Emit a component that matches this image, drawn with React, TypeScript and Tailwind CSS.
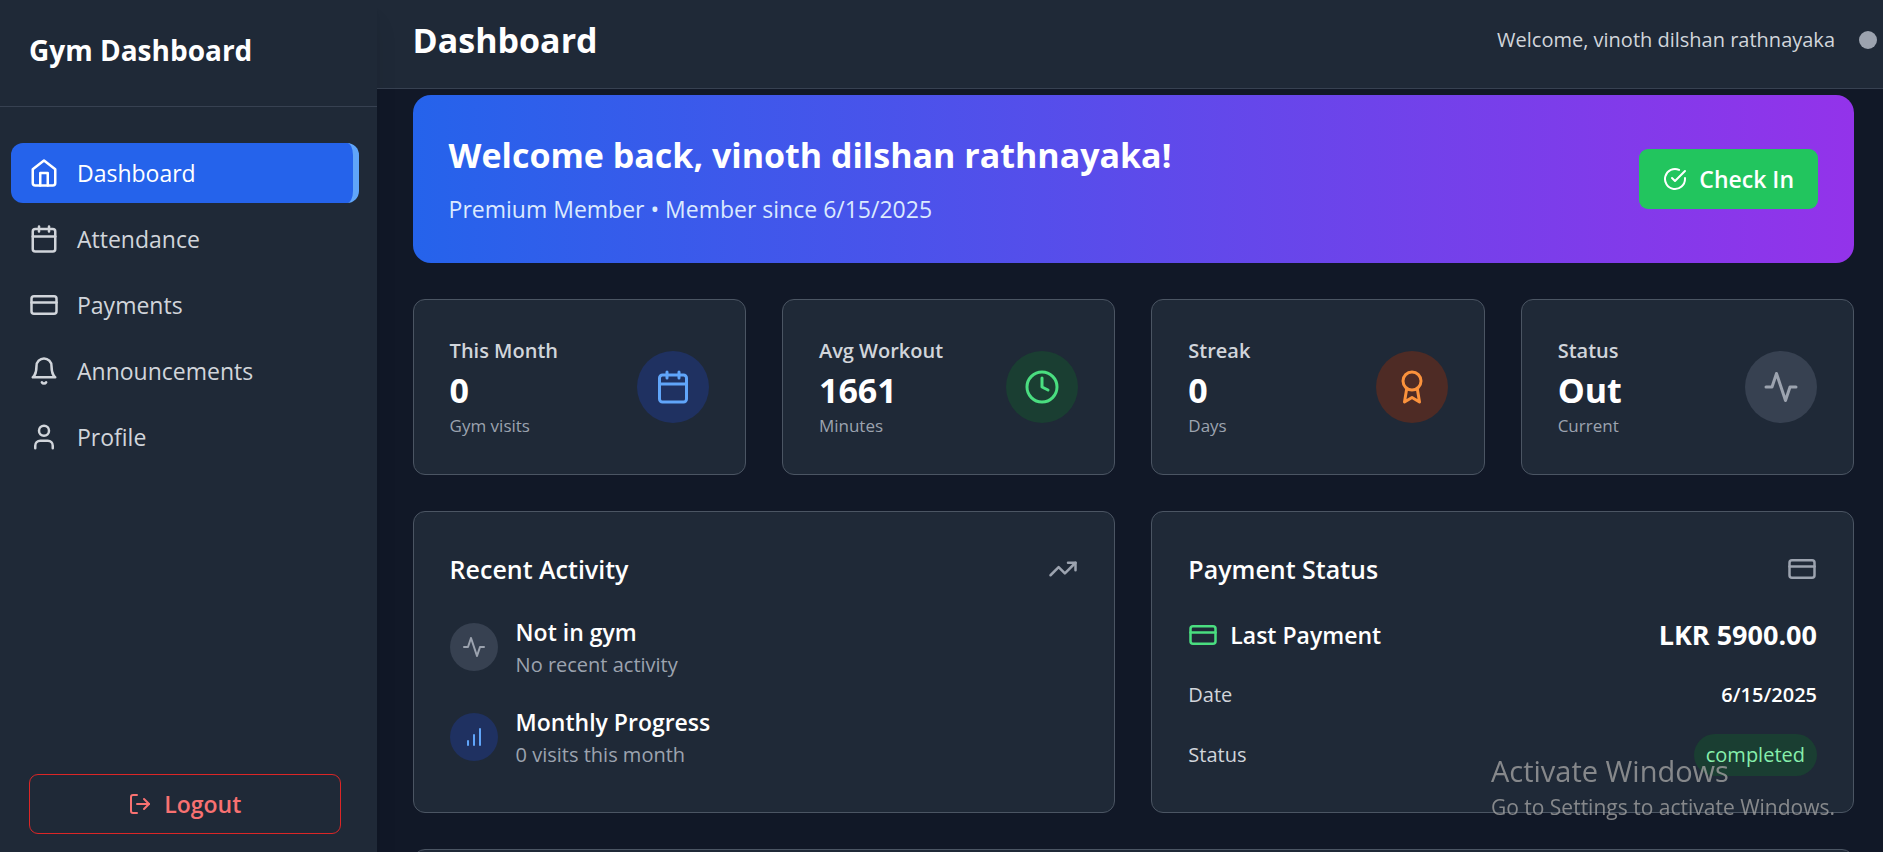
import type { ComponentType, ReactNode } from 'react';
import { Calendar, Clock, CreditCard, LogOut, TrendingUp, User } from 'lucide-react';
import { FiActivity, FiBarChart, FiBell, FiCheckCircle, FiHome } from 'react-icons/fi';

type Icon = ComponentType<{ className?: string }>;

const MEMBER = 'vinoth dilshan rathnayaka';

function AwardIcon({ className }: { className?: string }) {
  return (
    <svg
      className={className}
      viewBox="0 0 24 24"
      fill="none"
      stroke="currentColor"
      strokeWidth="2"
      strokeLinecap="round"
      strokeLinejoin="round"
      aria-hidden="true"
    >
      <circle cx="12" cy="8" r="6" />
      <path d="M15.477 12.89 17 22l-5-3-5 3 1.523-9.11" />
    </svg>
  );
}

const navItems: { label: string; icon: Icon; active?: boolean }[] = [
  { label: 'Dashboard', icon: FiHome, active: true },
  { label: 'Attendance', icon: Calendar },
  { label: 'Payments', icon: CreditCard },
  { label: 'Announcements', icon: FiBell },
  { label: 'Profile', icon: User },
];

const stats: { label: string; value: string; note: string; icon: Icon; tone: string }[] = [
  { label: 'This Month', value: '0', note: 'Gym visits', icon: Calendar, tone: 'bg-[#1f3161] text-[#60a5fa]' },
  { label: 'Avg Workout', value: '1661', note: 'Minutes', icon: Clock, tone: 'bg-[#1a3e32] text-[#4ade80]' },
  { label: 'Streak', value: '0', note: 'Days', icon: AwardIcon, tone: 'bg-[#4e2b25] text-[#fb923c]' },
  { label: 'Status', value: 'Out', note: 'Current', icon: FiActivity, tone: 'bg-[#374151] text-[#9ca3af]' },
];

const activities: { title: string; note: string; icon: Icon; tone: string }[] = [
  { title: 'Not in gym', note: 'No recent activity', icon: FiActivity, tone: 'bg-[#374151] text-[#9ca3af]' },
  { title: 'Monthly Progress', note: '0 visits this month', icon: FiBarChart, tone: 'bg-[#1f3161] text-[#60a5fa]' },
];

function Card({ children, className = '' }: { children?: ReactNode; className?: string }) {
  return (
    <section className={`rounded-xl border border-[#4b5563] bg-[#1f2937] p-9 ${className}`}>{children}</section>
  );
}

function CardHeader({ title, icon: Icon }: { title: string; icon: Icon }) {
  return (
    <div className="mb-6 flex items-center justify-between">
      <h3 className="text-[25px] leading-[42px] font-semibold text-white">{title}</h3>
      <Icon className="size-[30px] text-[#9ca3af]" />
    </div>
  );
}

function Sidebar() {
  return (
    <aside className="z-10 flex w-1/5 shrink-0 flex-col bg-[#1f2937] shadow-xl">
      <div className="border-b border-[#374151] px-[29px] pt-[29px] pb-[35px]">
        <h1 className="text-[28px] leading-[42px] font-bold whitespace-nowrap text-white">Gym Dashboard</h1>
      </div>
      <nav className="mt-9 flex flex-1 flex-col gap-1.5 pr-[18px] pl-[11px]">
        {navItems.map(({ label, icon: Icon, active }) => (
          <a
            key={label}
            href="#"
            aria-current={active ? 'page' : undefined}
            className={`flex h-[60px] items-center gap-[18px] rounded-xl pl-[18px] text-[23px] leading-9 ${
              active ? 'border-r-[6px] border-[#60a5fa] bg-[#2563eb] text-white' : 'text-[#d1d5db]'
            }`}
          >
            <Icon className="size-[30px]" />
            {label}
          </a>
        ))}
      </nav>
      <div className="pr-9 pb-[18px] pl-[29px]">
        <button
          type="button"
          className="flex h-[60px] w-full items-center justify-center gap-3 rounded-[9px] border border-[#dc2626] text-[23px] leading-9 font-semibold text-[#f87171]"
        >
          <LogOut className="size-6" />
          Logout
        </button>
      </div>
    </aside>
  );
}

function Header() {
  return (
    <header className="flex items-center justify-between border-b border-[#374151] bg-[#1f2937] pt-4 pr-1.5 pb-6 pl-9">
      <h2 className="text-[34px] leading-[48px] font-bold text-white">Dashboard</h2>
      <div className="flex items-center gap-6">
        <span className="text-[20px] leading-[30px] text-[#d1d5db]">Welcome, {MEMBER}</span>
        <span className="size-[18px] rounded-full bg-[#9ca3af]" />
      </div>
    </header>
  );
}

function Banner() {
  return (
    <section className="flex items-center justify-between rounded-[18px] bg-linear-to-r/srgb from-[#2563eb] to-[#9333ea] p-9">
      <div>
        <h2 className="mb-3 text-[34px] leading-[48px] font-bold text-white">Welcome back, {MEMBER}!</h2>
        <p className="text-[23px] leading-9 text-[#dbeafe]">Premium Member • Member since 6/15/2025</p>
      </div>
      <button
        type="button"
        className="flex h-[60px] items-center gap-3 rounded-[9px] bg-[#22c55e] px-6 text-[23px] leading-9 font-semibold text-white"
      >
        <FiCheckCircle className="size-6" />
        Check In
      </button>
    </section>
  );
}

export default function App() {
  return (
    <div className="flex h-screen overflow-hidden bg-[#111827] font-['Open_Sans','Noto_Sans',sans-serif]">
      <Sidebar />
      <div className="flex min-w-0 flex-1 flex-col">
        <Header />
        <main className="flex min-h-0 flex-1 flex-col gap-9 overflow-hidden pt-1.5 pr-[29px] pl-9 *:shrink-0">
          <Banner />
          <div className="grid grid-cols-4 gap-9">
            {stats.map(({ label, value, note, icon: Icon, tone }) => (
              <Card key={label} className="flex items-center justify-between">
                <div>
                  <p className="text-[20px] leading-[30px] font-semibold text-[#d1d5db]">{label}</p>
                  <p className="text-[34px] leading-[48px] font-bold text-white">{value}</p>
                  <p className="text-[17px] leading-6 text-[#9ca3af]">{note}</p>
                </div>
                <div className={`flex size-[72px] items-center justify-center rounded-full ${tone}`}>
                  <Icon className="size-9" />
                </div>
              </Card>
            ))}
          </div>
          <div className="grid grid-cols-2 gap-9">
            <Card>
              <CardHeader title="Recent Activity" icon={TrendingUp} />
              <ul className="flex flex-col gap-6">
                {activities.map(({ title, note, icon: Icon, tone }) => (
                  <li key={title} className="flex items-center gap-[18px]">
                    <div className={`flex size-12 items-center justify-center rounded-full ${tone}`}>
                      <Icon className="size-6" />
                    </div>
                    <div>
                      <p className="text-[23px] leading-9 font-semibold text-white">{title}</p>
                      <p className="text-[20px] leading-[30px] text-[#9ca3af]">{note}</p>
                    </div>
                  </li>
                ))}
              </ul>
            </Card>
            <Card>
              <CardHeader title="Payment Status" icon={CreditCard} />
              <dl className="flex flex-col gap-6">
                <div className="flex items-center justify-between">
                  <dt className="flex items-center gap-3 text-[23px] leading-9 font-semibold text-white">
                    <CreditCard className="size-[30px] text-[#4ade80]" />
                    Last Payment
                  </dt>
                  <dd className="text-[27px] leading-[42px] font-bold text-white">LKR 5900.00</dd>
                </div>
                <div className="flex items-center justify-between text-[20px] leading-[30px]">
                  <dt className="text-[#d1d5db]">Date</dt>
                  <dd className="font-semibold text-white">6/15/2025</dd>
                </div>
                <div className="flex items-center justify-between text-[20px] leading-[30px]">
                  <dt className="text-[#d1d5db]">Status</dt>
                  <dd className="rounded-full bg-[#1a3e32] px-3 py-1.5 text-[#86efac]">completed</dd>
                </div>
              </dl>
            </Card>
          </div>
          <Card />
        </main>
      </div>
      <div className="pointer-events-none fixed right-12 bottom-[30px] z-20 text-[#a0a0a0]/80">
        <p className="text-[29px] leading-[42px]">Activate Windows</p>
        <p className="text-[21px] leading-[30px]">Go to Settings to activate Windows.</p>
      </div>
    </div>
  );
}
